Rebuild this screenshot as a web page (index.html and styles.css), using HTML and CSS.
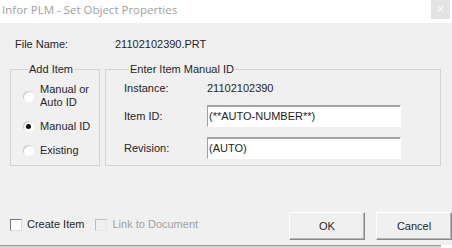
FILE: index.html
```html
<!DOCTYPE html>
<html lang="en">

<head>
    <meta charset="UTF-8">
    <meta name="viewport" content="width=device-width, initial-scale=1.0">
    <link rel="stylesheet" href="styles.css">
    <title>Infor PLM - Set Object Properties</title>
</head>

<body>

    <div class="window">
        <div class="titlebar">
            <span class="title">Infor PLM - Set Object Properties</span>
            <span class="close">&#215;</span>
        </div>

        <div class="content">
            <div class="file-row">
                <span class="file-label">File Name:</span>
                <span>21102102390.PRT</span>
            </div>

            <div class="groups">
                <fieldset class="add-item">
                    <legend>Add Item</legend>
                    <div class="radio">
                        <span class="dot"></span>
                        <span>Manual or<br>Auto ID</span>
                    </div>
                    <div class="radio">
                        <span class="dot checked"></span>
                        <span>Manual ID</span>
                    </div>
                    <div class="radio">
                        <span class="dot"></span>
                        <span>Existing</span>
                    </div>
                </fieldset>

                <fieldset class="manual-id">
                    <legend>Enter Item Manual ID</legend>
                    <div class="field-grid">
                        <span>Instance:</span>
                        <span>21102102390</span>
                        <label for="itemId">Item ID:</label>
                        <input type="text" id="itemId" value="(**AUTO-NUMBER**)">
                        <label for="revision">Revision:</label>
                        <input type="text" id="revision" value="(AUTO)">
                    </div>
                </fieldset>
            </div>

            <div class="footer">
                <div class="check">
                    <span class="box"></span>
                    <span>Create Item</span>
                </div>
                <div class="check disabled">
                    <span class="box"></span>
                    <span>Link to Document</span>
                </div>
                <button class="ok">OK</button>
                <button>Cancel</button>
            </div>
        </div>
        <div class="under"></div>
    </div>

</body>

</html>
```

FILE: styles.css
```css
body {
    margin: 0;
    font-family: 'Liberation Sans', Arial, sans-serif;
    font-size: 11px;
    color: #262626;
}

.window {
    width: 452px;
    height: 248px;
    display: flex;
    flex-direction: column;
    overflow: hidden;
}

.titlebar {
    height: 23px;
    flex-shrink: 0;
    background-color: #fff;
    display: flex;
    justify-content: space-between;
    align-items: flex-start;
}

.title {
    font-family: 'Open Sans', sans-serif;
    font-size: 11.5px;
    color: #a0a0a0;
    margin: 2px 0 0 2px;
}

.close {
    width: 19px;
    height: 19px;
    margin-right: 2px;
    background-color: #e3e3e3;
    color: #fafafa;
    font-size: 14px;
    line-height: 19px;
    text-align: center;
}

.content {
    flex: 1;
    background-color: #f0f0f0;
    padding-top: 15px;
    box-sizing: border-box;
}

.file-row {
    display: flex;
    line-height: 13px;
    padding-left: 15px;
}

.file-label {
    width: 100px;
}

.groups {
    display: flex;
    gap: 5px;
    margin: 12px 0 0 10px;
}

fieldset {
    margin: 0;
    border: 1px solid #d3d3d3;
    box-sizing: border-box;
    height: 103px;
    padding: 0;
}

legend {
    line-height: 13px;
    padding: 0 1px;
    margin-left: 5px;
}

.add-item {
    width: 90px;
    padding: 7px 0 0 12px;
    display: flex;
    flex-direction: column;
    gap: 11px;
}

.radio {
    display: flex;
    align-items: center;
    gap: 6px;
    line-height: 13px;
}

.dot {
    width: 11px;
    height: 11px;
    border-radius: 50%;
    background-color: #fff;
    box-shadow: inset 1px 1px 0 #c8c8c8;
    position: relative;
    flex-shrink: 0;
}

.dot.checked::after {
    content: '';
    position: absolute;
    left: 3px;
    top: 3px;
    width: 5px;
    height: 5px;
    border-radius: 50%;
    background-color: #111;
}

.manual-id {
    width: 336px;
    padding: 6px 0 0 18px;
}

.field-grid {
    display: grid;
    grid-template-columns: 83px 194px;
    grid-template-rows: 13px 22px 22px;
    row-gap: 10px;
    align-items: center;
    line-height: 13px;
}

.field-grid input {
    height: 22px;
    box-sizing: border-box;
    margin: 0;
    padding: 0 2px 0 1px;
    font: inherit;
    color: #262626;
    background-color: #fff;
    border: 1px solid;
    border-color: #a0a0a0 #fff #fff #a0a0a0;
    box-shadow: inset 0 1px 0 #a8a8a8;
    outline: none;
}

.footer {
    display: flex;
    align-items: flex-start;
    margin-top: 46px;
    padding-left: 10px;
}

.check {
    display: flex;
    align-items: center;
    gap: 5px;
    margin-top: 6px;
    line-height: 13px;
}

.check.disabled {
    margin-left: 11px;
    color: #a0a0a0;
}

.box {
    width: 12px;
    height: 12px;
    box-sizing: border-box;
    background-color: #fff;
    border: 1px solid;
    border-color: #7a7a7a #dcdcdc #dcdcdc #7a7a7a;
}

.check.disabled .box {
    background-color: #f0f0f0;
    border-color: #bdbdbd #e6e6e6 #e6e6e6 #bdbdbd;
}

button {
    width: 76px;
    height: 28px;
    margin-left: 11px;
    font: inherit;
    color: #262626;
    background-color: #f0f0f0;
    border: 1px solid;
    border-color: #fff #8a8a8a #8a8a8a #fff;
    box-shadow: inset -1px -1px 0 #b4b4b4;
    padding: 0;
}

.ok {
    margin-left: auto;
}

.under {
    height: 2px;
    flex-shrink: 0;
    background-color: #d4d4d4;
    border-top: 1px solid #9a9a9a;
    margin-right: 11px;
}
```
